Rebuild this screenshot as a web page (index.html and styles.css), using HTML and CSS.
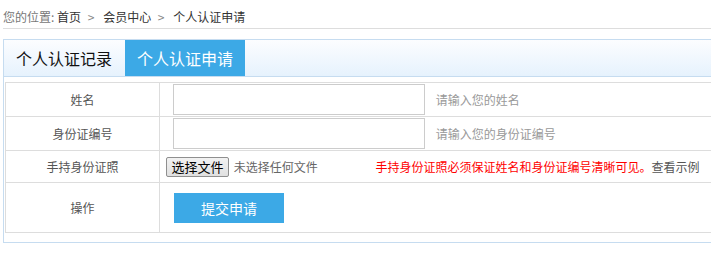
FILE: index.html
```html
<!DOCTYPE html>
<html lang="zh-CN">
<head>
    <meta charset="UTF-8">
    <meta name="viewport" content="width=device-width, initial-scale=1.0">
    <title>个人认证申请</title>
    <link rel="stylesheet" href="styles.css">
</head>
<body>
    <div class="page">
        <div class="crumb">
            <span class="crumb-label">您的位置:</span>
            <a href="#">首页</a>
            <span class="sep">&gt;</span>
            <a href="#">会员中心</a>
            <span class="sep">&gt;</span>
            <span class="current">个人认证申请</span>
        </div>

        <div class="panel">
            <div class="tabs">
                <div class="tab">个人认证记录</div>
                <div class="tab active">个人认证申请</div>
            </div>

            <table class="form-table">
                <tr class="row-input">
                    <td class="label">姓名</td>
                    <td class="field">
                        <input type="text" class="text-input">
                        <span class="hint">请输入您的姓名</span>
                    </td>
                </tr>
                <tr class="row-input">
                    <td class="label">身份证编号</td>
                    <td class="field">
                        <input type="text" class="text-input">
                        <span class="hint">请输入您的身份证编号</span>
                    </td>
                </tr>
                <tr class="row-file">
                    <td class="label">手持身份证照</td>
                    <td class="field">
                        <label class="file-btn">选择文件<input type="file" class="file-hidden"></label>
                        <span class="file-name">未选择任何文件</span>
                        <span class="warn">手持身份证照必须保证姓名和身份证编号清晰可见。</span><a href="#" class="example">查看示例</a>
                    </td>
                </tr>
                <tr class="row-action">
                    <td class="label">操作</td>
                    <td class="field">
                        <button class="submit">提交申请</button>
                    </td>
                </tr>
            </table>
        </div>
    </div>
</body>
</html>
```

FILE: styles.css
```css
html, body {
    margin: 0;
    overflow: hidden;
}
body {
    font-family: "Noto Sans CJK SC", "Microsoft YaHei", sans-serif;
    font-size: 12px;
    color: #333;
    background-color: #fff;
}
a {
    color: #333;
    text-decoration: none;
}
.page {
    width: 880px;
    padding-left: 3px;
}

.crumb {
    height: 20px;
    padding-top: 8px;
    line-height: 18px;
    border-bottom: 1px solid #ddd;
    margin-bottom: 10px;
}
.crumb-label {
    color: #777;
}
.crumb .sep {
    color: #888;
    margin: 0 6px 0 4px;
}

.panel {
    border: 1px solid #c6dcf0;
    padding-bottom: 9px;
}
.tabs {
    display: flex;
    height: 36px;
    border-bottom: 1px solid #c6dcf0;
    background: linear-gradient(#fcfdff, #e6f2fd);
}
.tab {
    width: 120px;
    margin-right: 1px;
    text-align: center;
    line-height: 36px;
    font-size: 16px;
    color: #111;
}
.tab.active {
    background-color: #3ca9e6;
    color: #fff;
}

.form-table {
    border-collapse: collapse;
    margin: 5px 0 0 1px;
    width: 860px;
}
.form-table td {
    border: 1px solid #ddd;
    padding: 0;
}
.form-table .label {
    width: 153px;
    text-align: center;
    color: #555;
}
.form-table .field {
    padding-left: 6px;
}
.row-input td {
    height: 33px;
}
.row-file td {
    height: 31px;
}
.row-action td {
    height: 49px;
}

.text-input {
    box-sizing: border-box;
    width: 252px;
    height: 31px;
    margin-left: 7px;
    border: 1px solid #ccc;
    vertical-align: middle;
}
.hint {
    color: #999;
    margin-left: 8px;
    vertical-align: middle;
}

.file-btn {
    display: inline-block;
    box-sizing: border-box;
    width: 63px;
    height: 20px;
    line-height: 18px;
    text-align: center;
    font-size: 13px;
    color: #000;
    border: 1px solid #8f8f8f;
    border-radius: 2px;
    background: linear-gradient(#f2f2f2, #e0e0e0);
    vertical-align: middle;
}
.file-hidden {
    display: none;
}
.file-name {
    color: #666;
    margin-left: 2px;
    font-size: 12px;
    vertical-align: middle;
}
.warn {
    color: #f00;
    margin-left: 55px;
    vertical-align: middle;
}
.example {
    color: #555;
    vertical-align: middle;
}

.submit {
    width: 110px;
    height: 30px;
    margin-left: 8px;
    border: none;
    background-color: #3ca9e6;
    color: #fff;
    font-family: inherit;
    font-size: 14px;
    cursor: pointer;
}
```
